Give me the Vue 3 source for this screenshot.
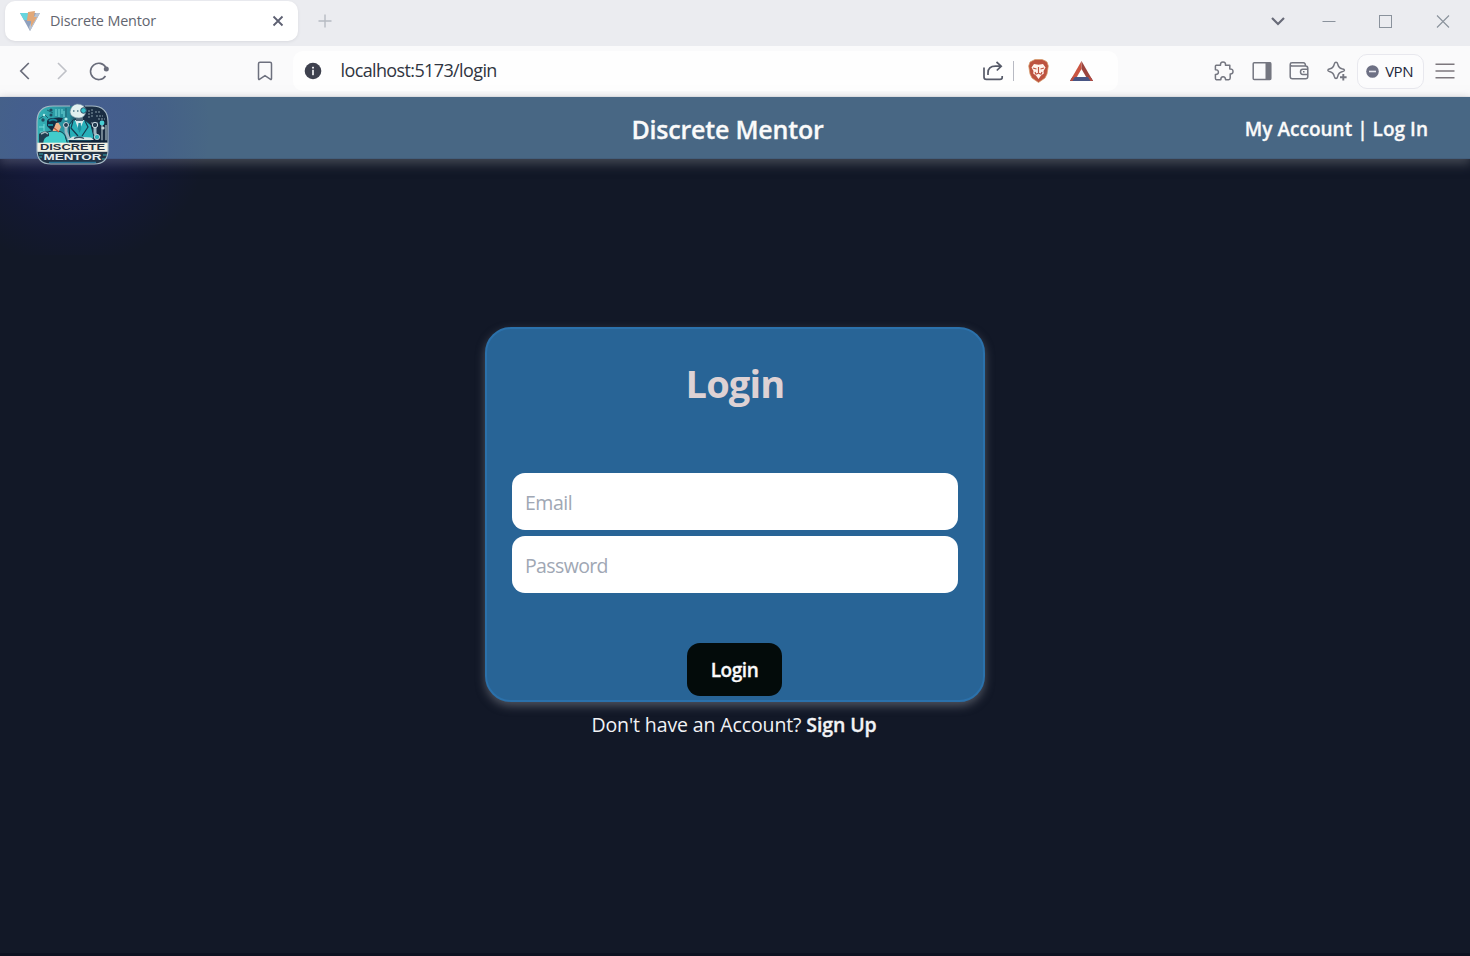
<script setup>
import { ref } from 'vue'

const email = ref('')
const password = ref('')
</script>

<template>
  <div class="window">
    <div class="tabstrip">
      <div class="tab">
        <svg class="favicon" width="20" height="20" viewBox="0 0 20 20">
          <path d="M0 2 L20 2 L10 20 Z" fill="#8fa0bd" />
          <path d="M0 2 L9 2 L7 9 L4 9 Z" fill="#66d5de" />
          <path d="M16 2 L20 2 L10 20 L9 16 Z" fill="#b9c3d2" />
          <path d="M8 1 L15 0 L14 6 L17 6 L11 16 L11 10 L7 10 Z" fill="#e2a878" />
        </svg>
        <span class="tab-title">Discrete Mentor</span>
        <svg class="tab-close" width="12" height="12" viewBox="0 0 12 12">
          <path d="M1.5 1.5 L10.5 10.5 M10.5 1.5 L1.5 10.5" stroke="#5d6072" stroke-width="1.8" />
        </svg>
      </div>
      <svg class="new-tab" width="14" height="14" viewBox="0 0 14 14">
        <path d="M7 0.5 V13.5 M0.5 7 H13.5" stroke="#b7bbc2" stroke-width="1.4" />
      </svg>
      <div class="window-controls">
        <svg width="14" height="10" viewBox="0 0 14 10"><path d="M1 2 L7 8 L13 2" fill="none" stroke="#686b78" stroke-width="2.2" /></svg>
        <svg width="14" height="14" viewBox="0 0 14 14"><path d="M0.5 7.5 H13.5" stroke="#8a929c" stroke-width="1" /></svg>
        <svg width="14" height="14" viewBox="0 0 14 14"><rect x="1.5" y="1.5" width="12" height="12" fill="none" stroke="#8a929c" stroke-width="1" /></svg>
        <svg width="14" height="14" viewBox="0 0 14 14"><path d="M1 1.5 L13 13.5 M13 1.5 L1 13.5" stroke="#8a929c" stroke-width="1.1" /></svg>
      </div>
    </div>

    <div class="toolbar">
      <div class="nav-icons">
        <svg width="12" height="18" viewBox="0 0 12 18"><path d="M9.8 1 L1.8 9 L9.8 17" fill="none" stroke="#696c7a" stroke-width="1.7" /></svg>
        <svg width="12" height="18" viewBox="0 0 12 18"><path d="M2 1 L10 9 L2 17" fill="none" stroke="#bfc1c7" stroke-width="1.6" /></svg>
        <svg width="20" height="20" viewBox="0 0 20 20">
          <path d="M16.5 15 A8.2 8.2 0 1 1 16.8 6.3" fill="none" stroke="#696c7a" stroke-width="1.6" />
          <circle cx="17.3" cy="8" r="2.5" fill="#696c7a" />
        </svg>
      </div>
      <svg class="bookmark" width="16" height="20" viewBox="0 0 16 20">
        <path d="M3 1.2 H13 Q14.5 1.2 14.5 2.7 V17.6 Q14.5 19.2 13.2 18.2 L8 14.7 L2.8 18.2 Q1.5 19.2 1.5 17.6 V2.7 Q1.5 1.2 3 1.2 Z" fill="none" stroke="#6d707e" stroke-width="1.5" />
      </svg>
      <div class="address">
        <svg width="18" height="18" viewBox="0 0 18 18">
          <circle cx="9" cy="9" r="8.3" fill="#3e414e" />
          <rect x="8" y="4.8" width="2" height="1.7" fill="#e8e8eb" />
          <rect x="8" y="7.8" width="2" height="5.4" fill="#d5d6da" />
        </svg>
        <span class="url">localhost:5173/login</span>
        <div class="address-icons">
          <svg width="21" height="20" viewBox="0 0 21 20">
            <path d="M1 6.5 V16 Q1 18.4 3.4 18.4 H17 Q19.2 18.4 19.2 16.5 V15" fill="none" stroke="#565a68" stroke-width="1.7" />
            <path d="M5 14 V12 Q5 5.2 12.5 5.2 H18 M13.5 1 L18.2 5.2 L13.8 9.5" fill="none" stroke="#565a68" stroke-width="1.7" />
          </svg>
          <span class="divider"></span>
          <svg class="lion" width="21" height="24" viewBox="0 0 21 24">
            <path d="M5 1.5 L7 .5 H14 L16.5 1.5 L19 3 L20.3 7 L19 15 L17 19 L10.5 23.5 L4 19 L2 15 L.7 7 L2 3 Z" fill="#bd5340" stroke="#d59a65" stroke-width=".7" />
            <path d="M6 5 L10.5 5.8 L15 5 L17.5 8.5 L15.5 12 L15.8 14.5 L13 16.5 L10.5 20 L8 16.5 L5.2 14.5 L5.5 12 L3.5 8.5 Z" fill="#fff4ed" />
            <path d="M5 9 L8.5 10 M16 9 L12.5 10 M10.5 8 V14 M8.3 15.2 L10.5 14 L12.7 15.2 M7 13 L8 15.5 M14 13 L13 15.5" fill="none" stroke="#bd5340" stroke-width="1.2" />
          </svg>
          <svg class="triangle" width="23" height="20" viewBox="0 0 23 20">
            <path d="M11.5 0 L0 20 H4.5 L11.5 8 Z" fill="#ca5541" />
            <path d="M11.5 0 L23 20 H18.5 L11.5 8 Z" fill="#9b443e" />
            <path d="M0 20 L2.5 16 H20.5 L23 20 Z" fill="#485584" />
            <path d="M0 20 L2.5 15.7 L5 16 L2.5 20 Z M23 20 L20.5 15.7 L18 16 L20.5 20 Z" fill="#b64b40" />
          </svg>
        </div>
      </div>
      <div class="extensions">
        <svg width="20" height="20" viewBox="0 0 20 20">
          <path d="M2.2 4.2 H6.5 Q6.3 1 9 1 Q11.8 1 11.5 4.2 H15.8 V8 Q19 7.8 19 10.5 Q19 13 16.2 12.9 V17 Q16.2 18.7 14.6 18.7 H11.6 Q11.4 15.7 9 15.8 Q6.8 15.9 6.8 18.7 H2.4 Q1.4 18.5 1.4 17.2 V13.4 Q4.5 13.5 4.4 11 Q4.3 8.6 1.4 8.8 V5.2 Q1.4 4.2 2.2 4.2 Z" fill="none" stroke="#747680" stroke-width="1.5" stroke-linejoin="round" />
        </svg>
        <svg width="20" height="20" viewBox="0 0 20 20">
          <rect x="1.2" y="1.7" width="17.6" height="16.8" rx="1" fill="none" stroke="#747680" stroke-width="1.5" />
          <rect x="13.5" y="1.5" width="5.5" height="17" fill="#747680" />
        </svg>
        <svg width="20" height="20" viewBox="0 0 20 20">
          <path d="M1.2 4 V15.5 Q1.2 17.8 3.5 17.8 H16.5 Q18.8 17.8 18.8 15.5 V7.3 Q18.8 5 16.5 5 H3 Q1.2 5 1.2 3.2 Q1.2 1.8 3 1.8 H14.5 Q16.3 1.8 16.5 4.8" fill="none" stroke="#747680" stroke-width="1.5" />
          <path d="M18.8 8.2 H13.8 Q11.5 8.2 11.5 10.8 Q11.5 13.4 13.8 13.4 H18.8 M14 10.8 H15.5" fill="none" stroke="#747680" stroke-width="1.5" />
        </svg>
        <svg width="20" height="20" viewBox="0 0 20 20">
          <path d="M9 1.2 Q10.3 1.2 10.7 3 Q11.5 7 15 7.8 Q17.5 8.3 17.5 9.3 Q17.5 10.2 15 10.8 Q11.5 11.7 10.7 15.5 Q10.3 17.5 9 17.5 Q7.8 17.5 7.3 15.5 Q6.5 11.7 3 10.8 Q.8 10.2 .8 9.3 Q.8 8.3 3 7.8 Q6.5 7 7.3 3 Q7.8 1.2 9 1.2 Z" fill="#fafafb" stroke="#747680" stroke-width="1.4" />
          <path d="M16.3 12.8 V19.5 M13 16.2 H19.6" stroke="#fafafb" stroke-width="4" />
          <path d="M16.3 13 V19.5 M13 16.2 H19.6" stroke="#747680" stroke-width="1.9" />
        </svg>
      </div>
      <div class="vpn">
        <svg width="13" height="13" viewBox="0 0 13 13"><circle cx="6.5" cy="6.5" r="6.3" fill="#6d7084" /><path d="M3 6.5 H10" stroke="#e8e8ef" stroke-width="1.6" /></svg>
        <span>VPN</span>
      </div>
      <svg class="menu" width="20" height="16" viewBox="0 0 20 16"><path d="M.5 1.2 H19.5 M.5 8 H19.5 M.5 14.8 H19.5" stroke="#7c777d" stroke-width="1.4" /></svg>
    </div>

    <div class="page">
      <header class="site-header">
        <svg class="logo" width="75" height="64" viewBox="0 0 75 64">
          <defs>
            <clipPath id="badge"><path d="M18 3 H57 Q73 3 73 19 V47 Q73 61 59 61 H16 Q2 61 2 47 V19 Q2 3 18 3 Z" /></clipPath>
            <linearGradient id="backdrop" x1="0" x2="1"><stop offset="0" stop-color="#35b5b8" /><stop offset=".46" stop-color="#278b9b" /><stop offset=".58" stop-color="#1c3046" /><stop offset="1" stop-color="#182b40" /></linearGradient>
          </defs>
          <g clip-path="url(#badge)">
            <rect width="75" height="64" fill="url(#backdrop)" />
            <path d="M21 6 V13 M24 6 V14 M27 6 V11 M29 8 V14 M4 24 H9 M5 29 H8 M9 21 V31" stroke="#7ce1df" stroke-width=".9" />
            <path d="M4 16 L10 12 L13 15 M12 7 L18 10 M31 5 V24 M6 36 H14" stroke="#1d6070" stroke-width="1" fill="none" />
            <circle cx="8" cy="17" r="1.7" fill="#244d60" /><circle cx="16" cy="7" r="1.6" fill="#1e4a60" /><circle cx="16" cy="12" r="1.5" fill="#1e4a60" />
            <circle cx="9" cy="12" r="1.2" fill="#b7efeb" /><circle cx="31" cy="16" r="1.6" fill="#b7efeb" />
            <path d="M54 7 V16 M57 6 V14 M60 9 H66 M61 13 H68 M63 16 H70 M56 20 H63" stroke="#93a9b3" stroke-width=".9" stroke-dasharray="2 1" />
            <path d="M67 18 V40 M71 22 V40" stroke="#a9bdc4" stroke-width="1.2" />
            <circle cx="67" cy="20" r="2.4" fill="#49ced4" /><circle cx="68" cy="25" r="1.6" fill="#c0cfd4" />
            <!-- robot teacher -->
            <path d="M35 38 L34 22 L38 17 H50 L56 22 L59 34 L56 39 Z" fill="#28b0b9" stroke="#173047" stroke-width="1" />
            <path d="M40 17 L44 28 L49 17 Z" fill="#dceced" /><path d="M43.5 20 H45.7 L46.3 26 L44.5 30 L42.7 26 Z" fill="#1f8f9f" />
            <path d="M38 18 L36 25 L43 33 M50 18 L53 24 L47 33" fill="none" stroke="#173b50" stroke-width="1.2" />
            <path d="M41 14 H48 V18 H41 Z" fill="#526a7c" />
            <path d="M31 22 V29 L34 36 M60 22 V30 L62 35" stroke="#9db8c3" stroke-width="3" fill="none" />
            <circle cx="31" cy="22" r="2.5" fill="#263e53" stroke="#c9d8df" /><circle cx="60" cy="22" r="2.7" fill="#263e53" stroke="#c9d8df" /><circle cx="62" cy="34" r="2.6" fill="#2bafb8" stroke="#b8cbd4" />
            <!-- seated student -->
            <path d="M7 42 V33 Q9 29 17 28 H23 Q30 29 31 36 L33 42 Z" fill="#42cccb" stroke="#173c4c" stroke-width="1" />
            <path d="M4 42 V31 Q10 26 14 30 V33 Q8 34 8 42 Z" fill="#203e50" />
            <path d="M6 31 L10 29 L13 31" fill="none" stroke="#9fb7bd" stroke-width="1.5" />
            <path d="M15 21 L23 19 L26 24 L24 28 L18 28 Z" fill="#efb28c" />
            <path d="M12 23 V18 Q13 15 18 15 Q24 14 28 15 L26 19 L21 20 L19 25 L17 28 Z" fill="#142c43" />
            <path d="M14 18 Q18 15 22 18 M13 22 L18 22" fill="none" stroke="#17899b" stroke-width="2" />
            <path d="M19 25 L24 29" stroke="#c45a3e" stroke-width="1.2" />
            <path d="M32 37 L38 33.5 L56 34.5 L59 37 Z" fill="#d8e4e5" /><path d="M39 35.5 Q44 33 49 35.5" fill="none" stroke="#364e61" stroke-width="1.3" />
            <path d="M34 38.5 H72" stroke="#10243a" stroke-width="2.5" />
            <rect x="2" y="39.7" width="71" height="9.2" fill="#f2f0e4" />
            <rect x="2" y="48.9" width="71" height="13" fill="#223447" />
            <path d="M4 51 H8 M4 54 H7 M68 52 H72 M67 56 H70" stroke="#33a5af" stroke-width="1.2" />
            <text x="5" y="47.3" class="logo-dark" textLength="65" lengthAdjust="spacingAndGlyphs">DISCRETE</text>
            <text x="8.5" y="57.3" class="logo-light" textLength="58" lengthAdjust="spacingAndGlyphs">MENTOR</text>
            <path d="M14 59.5 H61" stroke="#287397" stroke-width="1.3" />
          </g>
          <path d="M35 3 H18 Q2 3 2 19 V47 Q2 61 16 61 H59 Q73 61 73 47 V19 Q73 3 57 3 H50" fill="none" stroke="#a7bac6" stroke-width="1.1" />
          <path d="M35 9 Q36 2 42 1 Q50 1 51 8 Q50 15 44 15 Q36 15 35 9 Z" fill="#e2f0f0" stroke="#7090a2" stroke-width=".6" />
          <path d="M38 8 H39.5 M42 8 H43.5" stroke="#52798a" stroke-width="1.3" />
          <circle cx="48.5" cy="7.5" r="2.8" fill="#35bec9" stroke="#315067" />
        </svg>
        <h1>Discrete Mentor</h1>
        <a class="account">My Account | Log In</a>
      </header>

      <main>
        <form class="card" @submit.prevent>
          <h2><span>Login</span></h2>
          <input v-model="email" type="email" placeholder="Email" class="email-input" />
          <input v-model="password" type="password" placeholder="Password" class="password-input" />
          <button type="submit"><span>Login</span></button>
        </form>
        <p class="signup"><span>Don't have an Account?</span><strong>Sign Up</strong></p>
      </main>
    </div>
  </div>
</template>

<style>
body { overflow: hidden; background: #121827; }
</style>

<style scoped>
* { box-sizing: border-box; }
svg { display: block; flex: none; }
.window { height: 956px; width: 1470px; display: flex; flex-direction: column; overflow: hidden; font-family: "Open Sans", "Noto Sans", sans-serif; }
.tabstrip { height: 46px; flex: none; background: #ebecf0; display: flex; align-items: flex-start; padding: 1px 20px 0 5px; }
.tab { width: 293px; height: 40px; border-radius: 10px; background: #fff; display: flex; align-items: center; padding: 0 14px 0 15px; box-shadow: 0 1px 3px #d9dadf; }
.tab-title { margin: -2px 0 0 10px; font-size: 14.4px; color: #62656f; letter-spacing: -0.15px; white-space: nowrap; }
.tab-close { margin-left: auto; }
.new-tab { margin: 13px 0 0 19.5px; }
.window-controls { margin: 13px 0 0 auto; display: flex; align-items: center; }
.window-controls svg:nth-child(2) { margin-left: 37px; }
.window-controls svg:nth-child(3) { margin-left: 42px; }
.window-controls svg:nth-child(4) { margin-left: 44px; }
.toolbar { height: 51px; flex: none; background: #fafafb; display: flex; align-items: center; padding: 0 15.5px 0 19px; border-bottom: 1px solid #edeef2; }
.nav-icons { display: flex; align-items: center; gap: 22px; }
.nav-icons svg:first-child { margin-right: 3px; }
.nav-icons svg:last-child { margin-left: -1px; }
.bookmark { margin-left: 147.5px; }
.address { width: 825px; height: 40px; margin-left: 20.5px; padding-left: 11px; border-radius: 10px; background: #fefefe; display: flex; align-items: center; }
.url { margin: -2px 0 0 18.5px; font-size: 18px; letter-spacing: -0.62px; color: #303541; white-space: nowrap; }
.address-icons { margin-left: auto; padding-right: 25.5px; display: flex; align-items: center; }
.divider { width: 1px; height: 20px; background: #b8bac3; margin: 0 14px 0 9px; }
.triangle { margin-left: 21px; }
.extensions { margin-left: 96px; display: flex; align-items: center; gap: 17.7px; }
.vpn { width: 67px; height: 35px; margin-left: 10px; padding-right: 2px; border: 1.5px solid #e8e8ee; border-radius: 10px; background: #fcfcfd; display: flex; align-items: center; justify-content: center; gap: 6px; font-size: 15px; letter-spacing: -0.5px; color: #22273a; }
.menu { margin-left: auto; }
.page { flex: 1; min-height: 0; display: flex; flex-direction: column; position: relative; background: #121827; border-bottom: 3px solid #0c1120; }
.site-header { height: 62px; flex: none; padding: 0 42px 0 35px; display: grid; grid-template-columns: 200px 1fr 200px; align-items: center; background: #486784; border-bottom: 1px solid #435e7b; box-shadow: 0 4px 10px 1px #6d707888; }
.logo { align-self: start; margin-top: 6px; position: relative; z-index: 2; }
.site-header::after { content: ""; position: absolute; left: 0; top: 0; width: 215px; height: 158px; background: radial-gradient(circle 140px at 72px 30px, #3a28d426 0%, #2a26c820 40%, #1c18b012 68%, transparent 100%); }
.logo-dark, .logo-light { font-family: "Liberation Sans", sans-serif; font-weight: 700; font-size: 8.4px; }
.logo-dark { fill: #253141; }
.logo-light { fill: #e6edf0; }
h1 { margin: -7px 0 0 -8px; justify-self: center; color: #fafafa; font-size: 25px; line-height: 34px; font-weight: 600; letter-spacing: -0.2px; -webkit-text-stroke: 0.3px #fafafa; white-space: nowrap; }
.account { justify-self: end; color: #fafafa; font-size: 19px; line-height: 26px; font-weight: 600; -webkit-text-stroke: 0.3px #fafafa; white-space: nowrap; letter-spacing: 0.02px; margin-top: -9px; padding-top: 2px; }
main { flex: 1; display: flex; flex-direction: column; align-items: center; padding-top: 168px; }
.card { width: 500px; height: 375px; flex: none; padding: 27px 25px 4px; border: 2px solid #2b71ab; border-radius: 26px; background: #286496; box-shadow: 0 4px 10px #777b8599; display: flex; flex-direction: column; align-items: center; }
h2 { margin: -1px 0 61px; height: 57px; line-height: 57px; color: #ded2d4; font-size: 38px; font-weight: 700; letter-spacing: -0.8px; }
input { width: 446px; height: 57px; flex: none; border: 0; border-radius: 13px; background: #fff; padding: 1px 13px 0; margin: 0 0 6px; outline: none; font: 19.5px "Open Sans", sans-serif; color: #222; }
input::placeholder { color: #a0a7b4; opacity: 1; }
.email-input { letter-spacing: -0.5px; }
.password-input { letter-spacing: -0.62px; }
button { width: 95px; height: 53px; margin: 44px 1px 0 0; flex: none; padding: 1px 0 0; border: 0; border-radius: 13px; background: #030b0a; color: #fafafa; font: 600 19px "Open Sans", sans-serif; letter-spacing: -0.45px; -webkit-text-stroke: 0.3px #fafafa; }
.signup { display: flex; gap: 5px; margin: 9px 0 0 -2px; color: #f1f2f5; font-size: 19.5px; line-height: 28px; letter-spacing: -0.12px; white-space: nowrap; }
strong { font-weight: 600; -webkit-text-stroke: 0.3px #fafafa; }
</style>
